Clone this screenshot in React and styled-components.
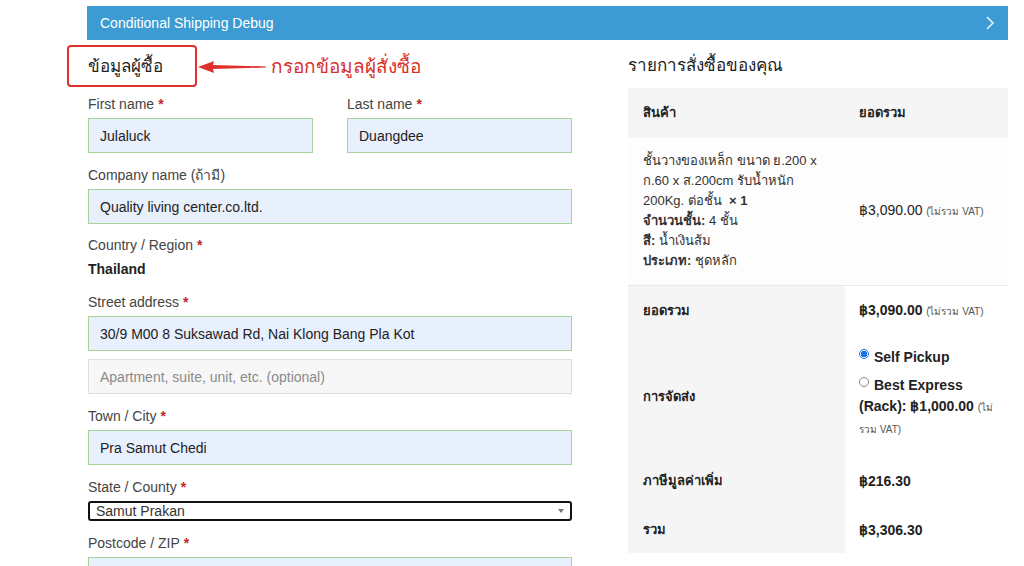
import React from 'react';
import styled, { createGlobalStyle } from 'styled-components';

const GlobalStyle = createGlobalStyle`
  body {
    margin: 0;
    background: #ffffff;
    font-family: "Liberation Sans", Arial, "Noto Sans", sans-serif;
    color: #333333;
  }
`;

const Page__styled = styled.div`
  position: relative;
  width: 921px;
  padding: 6px 0 0 87px;
`;

const DebugBar__styled = styled.div`
  height: 34px;
  padding: 0 13px;
  display: flex;
  align-items: center;
  justify-content: space-between;
  background-color: #3d9bd4;
  color: #ffffff;
  font-size: 14px;
`;

const Columns__styled = styled.div`
  display: grid;
  grid-template-columns: 484px 380px;
  column-gap: 56px;
  padding-left: 1px;
`;

const Heading__styled = styled.h3`
  margin: ${props => (props.side ? '14px 0 10px' : '15px 0 15px')};
  height: 24px;
  font-size: 17px;
  font-weight: 400;
  line-height: 24px;
  color: #222222;
`;

const FieldRow__styled = styled.div`
  display: grid;
  grid-template-columns: 225px 225px;
  column-gap: 34px;
`;

const Field__styled = styled.div`
  margin-bottom: ${props => props.gap || '12px'};
`;

const Label__styled = styled.div`
  margin-bottom: 4px;
  font-size: 14px;
  line-height: 20px;
  color: #444444;
`;

const Required__styled = styled.span`
  margin-left: 4px;
  color: #c1272d;
  font-weight: 700;
`;

const Input__styled = styled.div`
  box-sizing: border-box;
  height: 35px;
  padding: 0 11px;
  display: flex;
  align-items: center;
  font-size: 14px;
  color: ${props => (props.empty ? '#8a8a8a' : '#222222')};
  background-color: ${props => (props.empty ? '#f7f7f7' : '#e8f0fe')};
  border: 1px solid ${props => (props.empty ? '#dedede' : '#a7d49b')};
`;

const Static__styled = styled.div`
  margin: 4px 0 13px;
  font-size: 14px;
  font-weight: 700;
  line-height: 20px;
  color: #222222;
`;

const Select__styled = styled.div`
  box-sizing: border-box;
  height: 20px;
  padding: 0 6px;
  display: flex;
  align-items: center;
  justify-content: space-between;
  font-size: 14px;
  color: #333333;
  border: 2px solid #111111;
  border-radius: 3px;

  &::after {
    content: '';
    border-left: 3px solid transparent;
    border-right: 3px solid transparent;
    border-top: 4px solid #777777;
  }
`;

const Table__styled = styled.div`
  display: grid;
  grid-template-columns: 217px 163px;
  font-size: 13px;
  color: #333333;
`;

const Cell__styled = styled.div`
  padding: ${props => props.pad || '14px 15px'};
  display: flex;
  flex-direction: column;
  justify-content: center;
  line-height: 20px;
  background-color: ${props => props.bg || '#ffffff'};
  font-weight: ${props => (props.bold ? 700 : 400)};
  color: ${props => (props.bold ? '#222222' : '#333333')};
  border-bottom: ${props => (props.line ? '1px solid #e8e8e8' : 'none')};
`;

const Amount__styled = styled.span`
  font-size: 14px;
  font-weight: ${props => (props.plain ? 400 : 700)};
  color: #222222;
`;

const Note__styled = styled.span`
  font-size: 10px;
  font-weight: 400;
  color: #555555;
`;

const ShipList__styled = styled.ul`
  margin: 0;
  padding: 0;
  list-style: none;
`;

const ShipItem__styled = styled.li`
  display: flex;
  align-items: flex-start;
  gap: 5px;
  margin-bottom: 7px;
  font-size: 14px;
  font-weight: 700;
  line-height: 21px;
  color: #222222;

  &:last-child {
    margin-bottom: 0;
  }
`;

const Radio__styled = styled.span`
  box-sizing: border-box;
  flex-shrink: 0;
  width: 10px;
  height: 10px;
  margin-top: 2px;
  border-radius: 50%;
  border: 1px solid ${props => (props.checked ? '#1a73e8' : '#888888')};
  background: ${props =>
    props.checked ? 'radial-gradient(circle, #1a73e8 0 3px, #ffffff 3.5px)' : '#ffffff'};
`;

const ShipText__styled = styled.span`
  line-height: 21px;
`;

const ShipRate__styled = styled.span`
  font-size: 14px;
  font-weight: 700;
  line-height: 21px;
  color: #222222;
`;

const Marker__styled = styled.div`
  position: absolute;
  left: 67px;
  top: 45px;
  width: 130px;
  height: 42px;
  box-sizing: border-box;
  border: 2px solid #e0302c;
  border-radius: 4px;
`;

const Callout__styled = styled.div`
  position: absolute;
  left: 198px;
  top: 53px;
  display: flex;
  align-items: center;
  gap: 5px;
  font-size: 19px;
  line-height: 28px;
  color: #d8302b;
`;

const Chevron = () => (
  <svg width="10" height="16" viewBox="0 0 10 16">
    <polyline points="2,2 8,8 2,14" fill="none" stroke="#e6f2fb" strokeWidth="1.6" />
  </svg>
);

const Arrow = () => (
  <svg width="68" height="14" viewBox="0 0 68 14">
    <polygon points="0,7 16,1 15,5 68,6.4 68,7.6 15,9 16,13" fill="#e0302c" />
  </svg>
);

const Field = ({ label, required, value, empty, gap }) => (
  <Field__styled gap={gap}>
    {label && (
      <Label__styled>
        {label}
        {required && <Required__styled>*</Required__styled>}
      </Label__styled>
    )}
    <Input__styled empty={empty}>{value}</Input__styled>
  </Field__styled>
);

export default function App() {
  return (
    <>
      <GlobalStyle />
      <Page__styled>
        <DebugBar__styled>
          <span>Conditional Shipping Debug</span>
          <Chevron />
        </DebugBar__styled>

        <Columns__styled>
          <div>
            <Heading__styled>ข้อมูลผู้ซื้อ</Heading__styled>
            <FieldRow__styled>
              <Field label="First name" required value="Julaluck" />
              <Field label="Last name" required value="Duangdee" />
            </FieldRow__styled>
            <Field label="Company name (ถ้ามี)" gap="11px" value="Quality living center.co.ltd." />
            <Label__styled>
              Country / Region<Required__styled>*</Required__styled>
            </Label__styled>
            <Static__styled>Thailand</Static__styled>
            <Field
              label="Street address"
              required
              gap="8px"
              value="30/9 M00 8 Suksawad Rd, Nai Klong Bang Pla Kot"
            />
            <Field empty value="Apartment, suite, unit, etc. (optional)" />
            <Field label="Town / City" required value="Pra Samut Chedi" />
            <Field__styled gap="12px">
              <Label__styled>
                State / County<Required__styled>*</Required__styled>
              </Label__styled>
              <Select__styled>Samut Prakan</Select__styled>
            </Field__styled>
            <Field label="Postcode / ZIP" required value="" />
          </div>

          <div>
            <Heading__styled side>รายการสั่งซื้อของคุณ</Heading__styled>
            <Table__styled>
              <Cell__styled bg="#f5f5f5" bold pad="15px 15px">สินค้า</Cell__styled>
              <Cell__styled bg="#f5f5f5" bold pad="15px 14px">ยอดรวม</Cell__styled>

              <Cell__styled bg="#fdfdfd" line pad="13px 15px 14px">
                <div>
                  ชั้นวางของเหล็ก ขนาด ย.200 x ก.60 x ส.200cm รับน้ำหนัก 200Kg. ต่อชั้น <b>&nbsp;× 1</b>
                </div>
                <div><b>จำนวนชั้น:</b> 4 ชั้น</div>
                <div><b>สี:</b> น้ำเงินส้ม</div>
                <div><b>ประเภท:</b> ชุดหลัก</div>
              </Cell__styled>
              <Cell__styled bg="#fdfdfd" line pad="13px 14px 14px">
                <div>
                  <Amount__styled plain>฿3,090.00</Amount__styled> <Note__styled>(ไม่รวม VAT)</Note__styled>
                </div>
              </Cell__styled>

              <Cell__styled bg="#f5f5f5" bold pad="14px 15px 14px">ยอดรวม</Cell__styled>
              <Cell__styled pad="14px 14px 14px">
                <div>
                  <Amount__styled>฿3,090.00</Amount__styled> <Note__styled>(ไม่รวม VAT)</Note__styled>
                </div>
              </Cell__styled>

              <Cell__styled bg="#f5f5f5" bold>การจัดส่ง</Cell__styled>
              <Cell__styled pad="11px 14px 17px">
                <ShipList__styled>
                  <ShipItem__styled>
                    <Radio__styled checked />
                    <ShipText__styled>Self Pickup</ShipText__styled>
                  </ShipItem__styled>
                  <ShipItem__styled>
                    <Radio__styled />
                    <ShipText__styled>Best Express</ShipText__styled>
                  </ShipItem__styled>
                </ShipList__styled>
                <ShipRate__styled>
                  (Rack): ฿1,000.00 <Note__styled>(ไม่รวม VAT)</Note__styled>
                </ShipRate__styled>
              </Cell__styled>

              <Cell__styled bg="#f5f5f5" bold>ภาษีมูลค่าเพิ่ม</Cell__styled>
              <Cell__styled pad="14px 14px">
                <Amount__styled>฿216.30</Amount__styled>
              </Cell__styled>

              <Cell__styled bg="#f5f5f5" bold pad="15px 15px 13px">รวม</Cell__styled>
              <Cell__styled pad="15px 14px 13px">
                <Amount__styled>฿3,306.30</Amount__styled>
              </Cell__styled>
            </Table__styled>
          </div>
        </Columns__styled>

        <Marker__styled />
        <Callout__styled>
          <Arrow />
          <span>กรอกข้อมูลผู้สั่งซื้อ</span>
        </Callout__styled>
      </Page__styled>
    </>
  );
}
